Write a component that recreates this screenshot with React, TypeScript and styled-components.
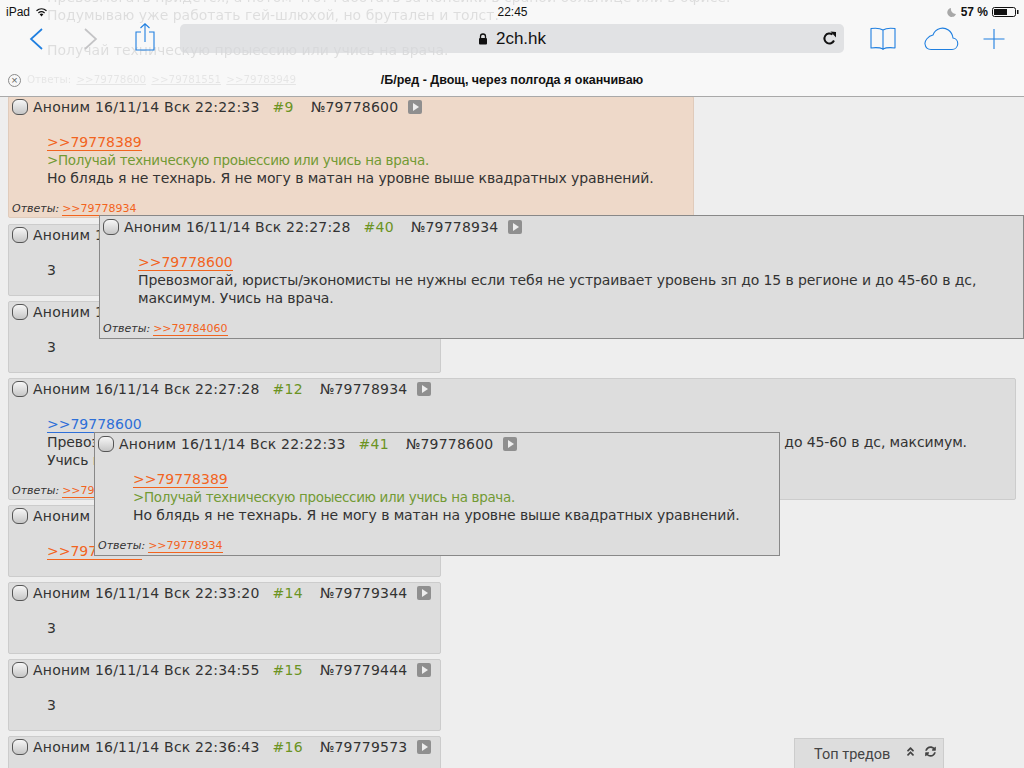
import { createGlobalStyle } from "styled-components";
import styled from "styled-components";
import { FaAngleDoubleUp, FaSyncAlt } from "react-icons/fa";

// posts of the thread, popups are rendered over them at the end of the page
interface PostData {
  date: string;
  num: string;
  id: string;
  reply?: string;
  replyActive?: boolean;
  green?: string;
  text?: string;
  answers?: string;
}

const GlobalStyle = createGlobalStyle`
  html, body {
    margin: 0;
    padding: 0;
    height: 768px;
    overflow: hidden;
    background: #eeeeee;
  }
`;

const Page = styled.div`
  position: relative;
  width: 1024px;
  height: 768px;
  overflow: hidden;
  background: #eeeeee;
  font-family: "DejaVu Sans", Verdana, sans-serif;
  font-size: 14px;
  color: #333;
`;

const Chrome = styled.header`
  position: relative;
  z-index: 1;
  height: 97px;
  background: #f8f8f8;
  border-bottom: 1px solid #a9a9a9;
  box-sizing: border-box;
  overflow: hidden;
  font-family: "Liberation Sans", Arial, sans-serif;
`;

const Ghost = styled.div<{ $top: number; $small?: boolean }>`
  position: absolute;
  left: ${(p) => (p.$small ? 27 : 47)}px;
  top: ${(p) => p.$top}px;
  font-family: "DejaVu Sans", Verdana, sans-serif;
  font-size: ${(p) => (p.$small ? 10.3 : 14)}px;
  white-space: nowrap;
  color: #333;
  opacity: ${(p) => (p.$small ? 0.09 : 0.13)};
  filter: blur(0.7px);

  u {
    margin-left: 2px;
  }
`;

const StatusBar = styled.div`
  position: relative;
  display: grid;
  grid-template-columns: 1fr auto 1fr;
  align-items: center;
  height: 23px;
  padding: 0 5px 0 6px;
  font-size: 12px;
  color: #111;
`;

const StatusLeft = styled.div`
  display: flex;
  align-items: center;
  gap: 5px;
`;

const StatusRight = styled.div`
  display: flex;
  align-items: center;
  justify-content: flex-end;
  gap: 4px;
  font-weight: bold;
`;

const Toolbar = styled.div`
  position: relative;
  display: flex;
  align-items: center;
  height: 31px;
`;

const ToolIcon = styled.svg`
  flex: none;
  fill: none;
  stroke: #1f7fe0;
  stroke-width: 1.1;
`;

const ArrowIcon = styled(ToolIcon)<{ $muted?: boolean }>`
  stroke: ${(p) => (p.$muted ? "#c4c4c6" : "#1f7fe0")};
  stroke-width: 1.7;
  margin-left: ${(p) => (p.$muted ? 2 : 0)}px;
  margin-right: ${(p) => (p.$muted ? -2 : 0)}px;
`;

const ShareIcon = styled(ToolIcon)`
  margin-top: -4px;
`;

const CloudIcon = styled(ToolIcon)`
  margin-left: 4px;
`;

const NavIcons = styled.div`
  display: flex;
  align-items: center;
  width: 180px;
  padding-left: 29px;
  box-sizing: border-box;
  gap: 39px;
`;

const AddressBar = styled.div`
  position: relative;
  flex: none;
  width: 664px;
  height: 29px;
  border-radius: 5px;
  background: rgba(214, 215, 218, 0.68);
  display: flex;
  align-items: center;
  justify-content: center;
  gap: 8px;
  font-size: 17px;
  color: #111;
`;

const Reload = styled.svg`
  position: absolute;
  right: 7px;
  top: 7px;
`;

const RightIcons = styled.div`
  display: flex;
  align-items: center;
  gap: 23px;
  padding-left: 26px;
`;

const TabRow = styled.div`
  position: relative;
  height: 26px;
  margin-top: 13px;
  display: flex;
  align-items: center;
  justify-content: center;
  font-size: 12.5px;
  font-weight: bold;
  color: #111;
`;

const CloseTab = styled.span`
  position: absolute;
  left: 8px;
  top: 7px;
  box-sizing: border-box;
  width: 13px;
  height: 13px;
  border-radius: 50%;
  border: 1px solid #8a8a8a;
  color: #666;
  font-size: 11px;
  font-weight: normal;
  line-height: 11px;
  text-align: center;
`;

const Thread = styled.main`
  display: flex;
  flex-direction: column;
  align-items: flex-start;
  gap: 5px;
  margin-top: -1px;
  padding: 0 8px;
`;

const Post = styled.article<{ $hl?: boolean; $wide?: boolean }>`
  position: relative;
  box-sizing: border-box;
  flex: none;
  width: ${(p) => (p.$wide ? "1008px" : "fit-content")};
  margin-bottom: ${(p) => (p.$hl ? 1 : 0)}px;
  padding: 0 9px 2px 3px;
  background: ${(p) => (p.$hl ? "#eed9c9" : "#dddddd")};
  border: 1px solid ${(p) => (p.$hl ? "#e0cbbb" : "#cccccc")};
  border-radius: 2px;
`;

const PopupBox = styled(Post)<{ $x: number; $y: number; $w: number }>`
  position: absolute;
  z-index: 2;
  left: ${(p) => p.$x}px;
  top: ${(p) => p.$y}px;
  width: ${(p) => p.$w}px;
  margin: 0;
  background: #dddddd;
  border: 1px solid #888888;
  border-radius: 0;
  padding: 1px 4px 3px 3px;
`;

const Head = styled.div`
  display: flex;
  align-items: center;
  height: 20px;
  white-space: nowrap;
  letter-spacing: 0.2px;
`;

const Check = styled.span`
  flex: none;
  box-sizing: border-box;
  width: 16px;
  height: 16px;
  margin-right: 5px;
  border-radius: 6px;
  border: 1px solid #555;
  background: linear-gradient(#f6f6f6, #c6c6c6);
`;

const Num = styled.span`
  color: #6b9323;
  margin-left: 13px;
`;

const Id = styled.span`
  margin-left: 17px;
`;

const Play = styled.span`
  position: relative;
  flex: none;
  width: 14px;
  height: 14px;
  margin-left: 10px;
  border-radius: 2px;
  background: #8f8f8f;

  &::after {
    content: "";
    position: absolute;
    left: 5px;
    top: 3px;
    border-style: solid;
    border-width: 4px 0 4px 6px;
    border-color: transparent transparent transparent #eee;
  }
`;

const Body = styled.div`
  margin: 16px 0 14px 35px;
  padding-right: 30px;
  line-height: 18px;
  min-height: 18px;
`;

const Line = styled.div<{ $green?: boolean }>`
  color: ${(p) => (p.$green ? "#729a34" : "#333")};
  font-size: ${(p) => (p.$green ? 13.5 : 14)}px;
  letter-spacing: ${(p) => (p.$green ? -0.33 : -0.1)}px;
`;

const Link = styled.a<{ $blue?: boolean }>`
  color: ${(p) => (p.$blue ? "#2d6fd8" : "#f2641e")};
  font-size: 14px;
  letter-spacing: 0;
  text-decoration: none;
  border-bottom: 1px solid ${(p) => (p.$blue ? "#2d6fd8" : "#f2641e")};
`;

const Answers = styled.div`
  margin-bottom: -1px;
  height: 15px;
  line-height: 15px;
  font-size: 11px;
  white-space: nowrap;

  em {
    margin-right: 3px;
  }

  a {
    font-size: 11px;
  }
`;

const TopThreads = styled.div`
  position: absolute;
  left: 794px;
  bottom: 0;
  box-sizing: border-box;
  width: 150px;
  height: 30px;
  display: flex;
  align-items: center;
  padding: 2px 0 0 19px;
  background: #dddddd;
  border: 1px solid #cccccc;
  border-bottom: none;
  font-family: "Roboto", "Liberation Sans", sans-serif;
  font-size: 14.5px;
  color: #444;

  svg {
    margin-top: -6px;
    font-size: 11px;
  }

  svg:first-of-type {
    margin-left: 15px;
  }

  svg:last-of-type {
    margin-left: 9px;
  }
`;

const posts: PostData[] = [
  {
    date: "16/11/14 Вск 22:22:33",
    num: "#9",
    id: "№79778600",
    reply: ">>79778389",
    green: ">Получай техническую проыессию или учись на врача.",
    text: "Но блядь я не технарь. Я не могу в матан на уровне выше квадратных уравнений.",
    answers: ">>79778934",
  },
  { date: "16/11/14 Вск 22:24:10", num: "#10", id: "№79778741", text: "3" },
  { date: "16/11/14 Вск 22:25:02", num: "#11", id: "№79778812", text: "3" },
  {
    date: "16/11/14 Вск 22:27:28",
    num: "#12",
    id: "№79778934",
    reply: ">>79778600",
    replyActive: true,
    text: "Превозмогай, юристы/экономисты не нужны если тебя не устраивает уровень зп до 15 в регионе и до 45-60 в дс, максимум. Учись на врача.",
    answers: ">>79784060",
  },
  { date: "16/11/14 Вск 22:30:41", num: "#13", id: "№79779102", reply: ">>79778600" },
  { date: "16/11/14 Вск 22:33:20", num: "#14", id: "№79779344", text: "3" },
  { date: "16/11/14 Вск 22:34:55", num: "#15", id: "№79779444", text: "3" },
  { date: "16/11/14 Вск 22:36:43", num: "#16", id: "№79779573", text: "3" },
];

function PostInner({ post }: { post: PostData }) {
  return (
    <>
      <Head>
        <Check />
        Аноним {post.date}
        <Num>{post.num}</Num>
        <Id>{post.id}</Id>
        <Play />
      </Head>
      <Body>
        {post.reply && (
          <Line>
            <Link $blue={post.replyActive}>{post.reply}</Link>
          </Line>
        )}
        {post.green && <Line $green>{post.green}</Line>}
        {post.text && <Line>{post.text}</Line>}
      </Body>
      {post.answers && (
        <Answers>
          <em>Ответы:</em>
          <Link>{post.answers}</Link>
        </Answers>
      )}
    </>
  );
}

export default function App() {
  return (
    <Page>
      <GlobalStyle />
      <Chrome>
        <Ghost $top={-11}>Превозмогать придётся, а потом что? Работать за копейки в сраной больнице или в офисе.</Ghost>
        <Ghost $top={7}>Подумываю уже работать гей-шлюхой, но брутален и толст.</Ghost>
        <Ghost $top={42}>Получай техническую проыессию или учись на врача.</Ghost>
        <Ghost $top={73} $small>
          Ответы: <u>&gt;&gt;79778600</u> <u>&gt;&gt;79781551</u> <u>&gt;&gt;79783949</u>
        </Ghost>
        <StatusBar>
          <StatusLeft>
            iPad
            <svg width="13" height="10" viewBox="0 0 13 10">
              <path d="M6.5 9.500 4.600 7.200a3 3 0 0 1 3.800 0Z" fill="#111" />
              <path d="M3.400 5.900a5 5 0 0 1 6.200 0M1.500 3.700a8 8 0 0 1 10 0" fill="none" stroke="#111" strokeWidth="1.3" />
            </svg>
          </StatusLeft>
          <span>22:45</span>
          <StatusRight>
            <svg width="10" height="10" viewBox="0 0 10 10">
              <path d="M4 1a4.500 4.500 0 1 0 5 6A5 5 0 0 1 4 1Z" fill="#a8a8a8" />
            </svg>
            57 %
            <svg width="27" height="10" viewBox="0 0 27 10">
              <rect x="0.5" y="0.5" width="23" height="9" rx="2" fill="none" stroke="#111" />
              <rect x="2" y="2" width="13" height="6" fill="#111" />
              <rect x="25" y="3" width="1.5" height="4" fill="#111" />
            </svg>
          </StatusRight>
        </StatusBar>
        <Toolbar>
          <NavIcons>
            <ArrowIcon width="14" height="22" viewBox="0 0 14 22">
              <path d="M13 1 2 11l11 10" />
            </ArrowIcon>
            <ArrowIcon $muted width="14" height="22" viewBox="0 0 14 22">
              <path d="m1 1 11 10L1 21" />
            </ArrowIcon>
            <ShareIcon width="20" height="28" viewBox="0 0 20 28">
              <path d="M6 9H1v18h18V9h-5M10 19V1M5.500 5 10 .8 14.500 5" />
            </ShareIcon>
          </NavIcons>
          <AddressBar>
            <svg width="10" height="12" viewBox="0 0 10 12">
              <path d="M2.500 5V3.500a2.500 2.500 0 0 1 5 0V5" fill="none" stroke="#111" strokeWidth="1.3" />
              <rect x="1" y="5" width="8" height="6.500" rx="1" fill="#111" />
            </svg>
            2ch.hk
            <Reload width="15" height="15" viewBox="0 0 15 15">
              <path d="M12 9.500A5 5 0 1 1 10.500 3.500" fill="none" stroke="#111" strokeWidth="2" />
              <path d="M8.500 0.500 14 1v5.500Z" fill="#111" />
            </Reload>
          </AddressBar>
          <RightIcons>
            <ToolIcon width="26" height="24" viewBox="0 0 26 24">
              <path d="M13 3C10 1 5 1 1 1.500V21c4-.5 9-.5 12 1 3-1.500 8-1.500 12-1V1.500C21 1 16 1 13 3Zm0 0v20" strokeLinejoin="round" />
            </ToolIcon>
            <CloudIcon width="36" height="24" viewBox="0 0 36 24">
              <path d="M8 22.500h21a5.800 5.800 0 0 0 1-11.500C29 4 23 0 17 1.500 13.500 2.500 11 5 10 8c-5 1-8.500 6-8 9 .5 3.500 3 5.500 6 5.500Z" />
            </CloudIcon>
            <ToolIcon width="24" height="24" viewBox="0 0 24 24">
              <path d="M12 2v20M1.500 12h21" />
            </ToolIcon>
          </RightIcons>
        </Toolbar>
        <TabRow>
          <CloseTab>×</CloseTab>
          /Б/ред - Двощ, через полгода я оканчиваю
        </TabRow>
      </Chrome>
      <Thread>
        {posts.map((post, i) => (
          <Post key={post.id} $hl={i === 0} $wide={i === 3}>
            <PostInner post={post} />
          </Post>
        ))}
      </Thread>
      <PopupBox $x={99} $y={215} $w={925}>
        <PostInner post={{ ...posts[3], num: "#40", replyActive: false }} />
      </PopupBox>
      <PopupBox $x={94} $y={432} $w={686}>
        <PostInner post={{ ...posts[0], num: "#41" }} />
      </PopupBox>
      <TopThreads>
        Топ тредов
        <FaAngleDoubleUp />
        <FaSyncAlt />
      </TopThreads>
    </Page>
  );
}
